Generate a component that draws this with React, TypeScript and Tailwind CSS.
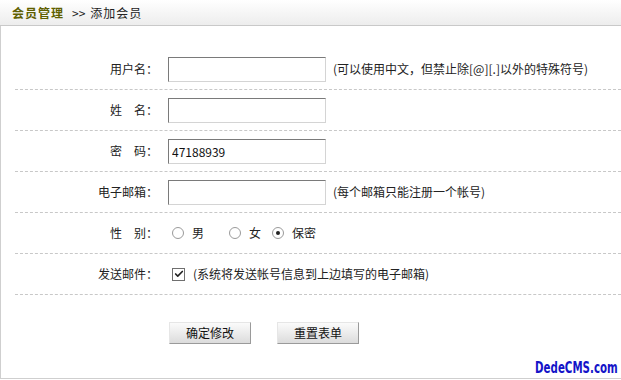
import { Check } from 'lucide-react';

const font = { fontFamily: '"Noto Sans CJK SC", "Liberation Sans", sans-serif' };

function Row({ label, children }: { label: string; children: React.ReactNode }) {
  return (
    <div className="ml-[14px] flex h-[41px] items-center border-b border-dashed border-[#c8c8c8]">
      <div className="w-[143px] shrink-0 whitespace-pre text-right text-[12px] text-[#222]">{label}</div>
      <div className="flex items-center pl-[10px]">{children}</div>
    </div>
  );
}

function TextBox({ value = '' }: { value?: string }) {
  return (
    <input
      defaultValue={value}
      className="h-[25px] w-[158px] border border-t-[#7a7a7a] border-l-[#7a7a7a] border-r-[#d4d4d4] border-b-[#d4d4d4] bg-white px-[3px] text-[12px] text-[#111] outline-none"
      style={font}
    />
  );
}

function Hint({ children }: { children: React.ReactNode }) {
  return <span className="pl-[7px] text-[12px] text-[#222]">{children}</span>;
}

function Radio({ checked = false, label }: { checked?: boolean; label: string }) {
  return (
    <span className="flex items-center">
      <span className="flex h-[12px] w-[12px] items-center justify-center rounded-full border border-[#9a9a9a] bg-white">
        {checked && <span className="h-[4px] w-[4px] rounded-full bg-[#222]"></span>}
      </span>
      <span className="pl-[8px] text-[12px] text-[#222]">{label}</span>
    </span>
  );
}

function Button({ children }: { children: React.ReactNode }) {
  return (
    <button
      className="h-[22px] w-[82px] border border-t-[#e6e6e6] border-l-[#e6e6e6] border-r-[#9a9a9a] border-b-[#9a9a9a] bg-gradient-to-b from-[#fbfbfb] to-[#dcdcdc] text-[12px] text-[#111]"
      style={font}
    >
      {children}
    </button>
  );
}

export default function App() {
  return (
    <div className="h-[380px] w-[621px] overflow-hidden bg-white" style={font}>
      <div className="flex h-[26px] items-center border-b border-[#c9c9c9] bg-gradient-to-b from-white to-[#ededed] pl-[12px] text-[12px]">
        <span className="font-bold tracking-[1px] text-[#5f5f00]">会员管理</span>
        <span className="pl-[8px] text-[#222]">&gt;&gt;</span>
        <span className="pl-[5px] tracking-[1px] text-[#222]">添加会员</span>
      </div>

      <div className="flex h-[353px] flex-col border-b border-l border-[#cfcfcf]">
        <div className="pt-[23px]">
          <Row label="用户名：">
            <TextBox />
            <Hint>(可以使用中文，但禁止除[@][.]以外的特殊符号)</Hint>
          </Row>
          <Row label={'姓\u3000名：'}>
            <TextBox />
          </Row>
          <Row label={'密\u3000码：'}>
            <TextBox value="47188939" />
          </Row>
          <Row label="电子邮箱：">
            <TextBox />
            <Hint>(每个邮箱只能注册一个帐号)</Hint>
          </Row>
          <Row label={'性\u3000别：'}>
            <div className="flex items-center gap-[25px] pl-[4px]">
              <Radio label="男" />
              <span className="flex items-center gap-[11px]">
                <Radio label="女" />
                <Radio checked label="保密" />
              </span>
            </div>
          </Row>
          <Row label="发送邮件：">
            <span className="ml-[4px] flex h-[13px] w-[13px] items-center justify-center border border-[#6f6f6f] bg-white">
              <Check className="h-[10px] w-[10px] text-[#222]" strokeWidth={4} />
            </span>
            <span className="pl-[8px] text-[12px] text-[#222]">(系统将发送帐号信息到上边填写的电子邮箱)</span>
          </Row>
        </div>

        <div className="flex gap-[26px] pl-[168px] pt-[27px]">
          <Button>确定修改</Button>
          <Button>重置表单</Button>
        </div>

        <div className="mt-auto flex justify-end pb-[1px] pr-[3px]">
          <span
            className="origin-right scale-x-[0.76] text-[15px] font-bold leading-[18px] text-[#1414c8]"
            style={{ fontFamily: '"Liberation Sans Narrow", "DejaVu Sans Condensed", sans-serif' }}
          >
            DedeCMS.com
          </span>
        </div>
      </div>
    </div>
  );
}
